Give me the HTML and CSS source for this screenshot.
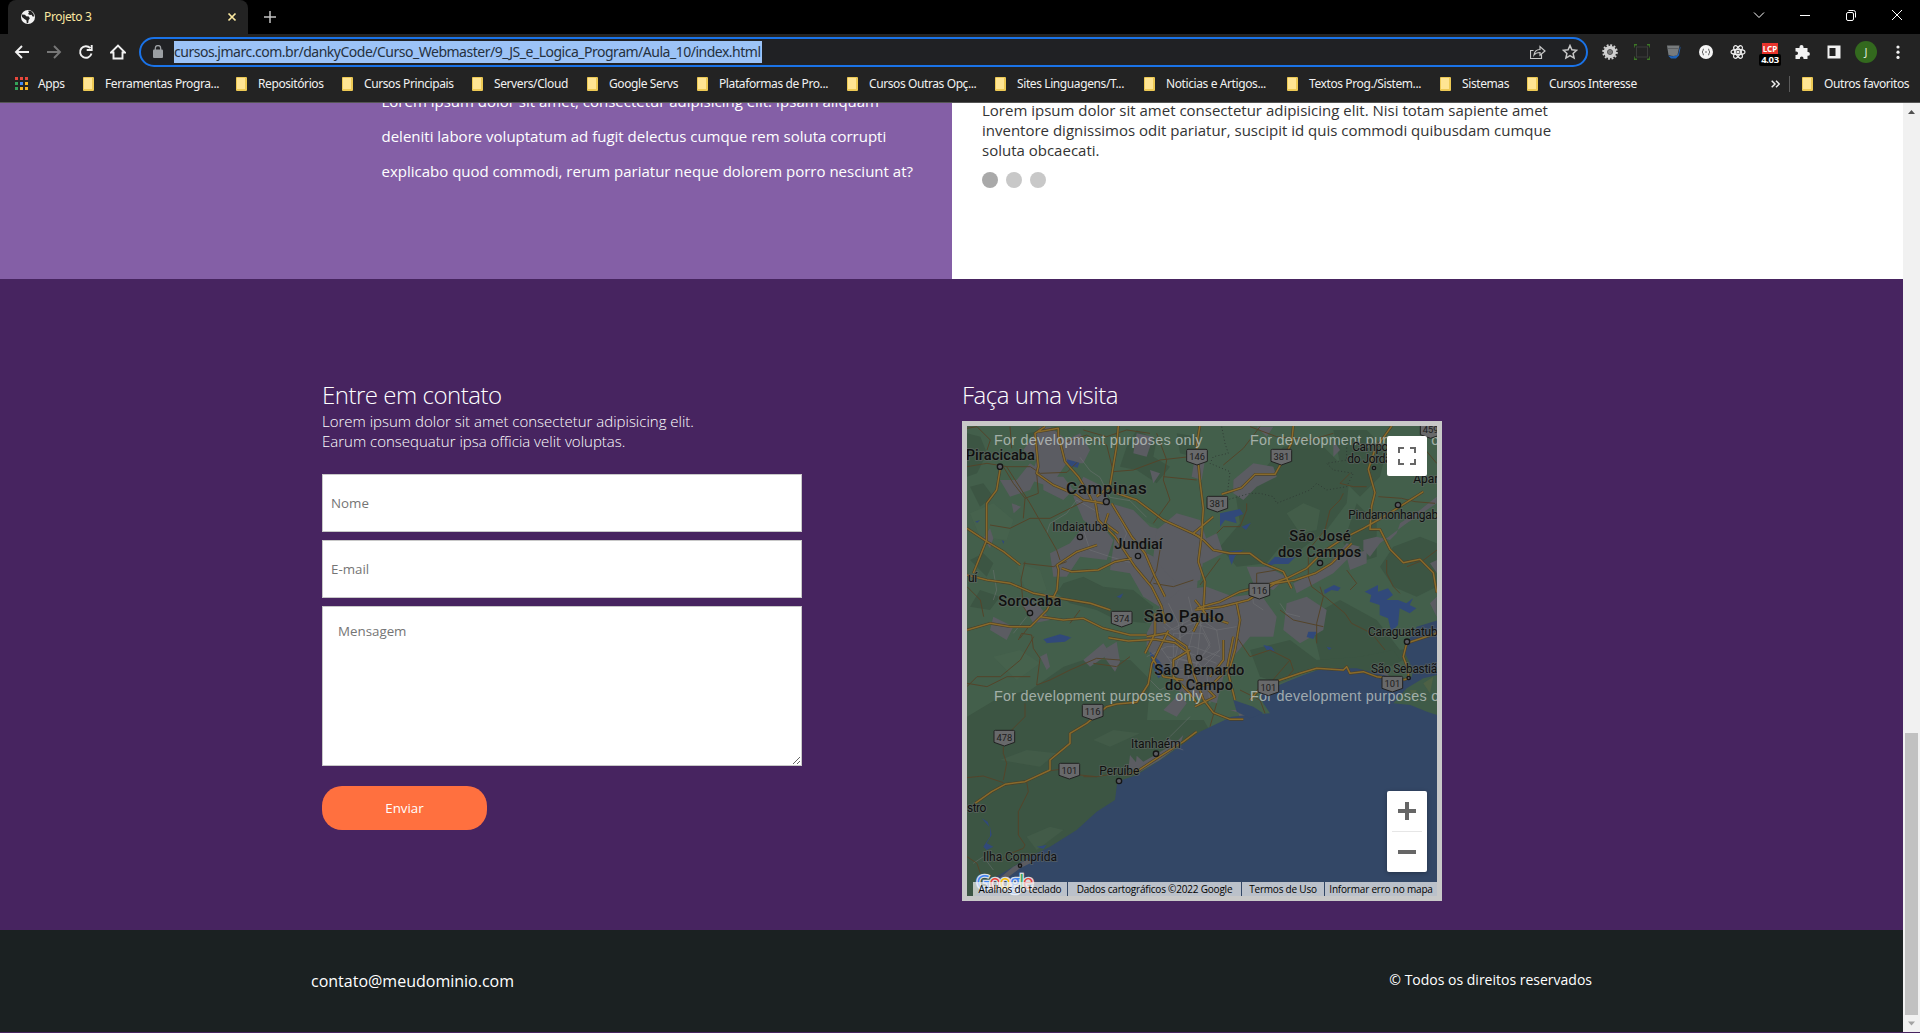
FILE: index.html
```html
<!DOCTYPE html>
<html lang="pt-br">
<head>
<meta charset="utf-8">
<title>Projeto 3</title>
<link rel="stylesheet" href="styles.css">
</head>
<body>
<header class="browser">
  <div class="tabstrip">
    <div class="tab">
      <svg class="favicon" width="16" height="16" viewBox="0 0 16 16"><circle cx="8" cy="8" r="7" fill="#f4f4f4"/><path d="M2 5.500l3 .2 1.200 1.600 2.600.3 1 1.900-1.200 1.600-.4 3-1.400.1-.4-3-2-1.300L2 8zM8 1.800l1 1.700-1 1.600 2 1 1.600-.4 1 1.800 1.600-.1-.8-3-2.300-2.300z" fill="#232323"/></svg>
      <span class="tab-title">Projeto 3</span>
      <svg class="tab-close" width="16" height="16" viewBox="0 0 16 16"><path d="M4.500 4.500l7 7m0-7l-7 7" stroke="#fbe8a0" stroke-width="1.700"/></svg>
    </div>
    <svg class="newtab" width="16" height="16" viewBox="0 0 16 16"><path d="M8 2v12M2 8h12" stroke="#c4c4c4" stroke-width="1.500"/></svg>
    <div class="window-buttons">
      <svg viewBox="0 0 16 16"><path d="M3 5.500l5 5 5-5" class="thin"/></svg>
      <svg viewBox="0 0 16 16"><path d="M3 8.500h10" class="thin"/></svg>
      <svg viewBox="0 0 16 16"><rect x="3.500" y="5.500" width="7" height="8" rx="1.500" class="thin"/><path d="M5.500 3.500h5a2 2 0 0 1 2 2v5" class="thin"/></svg>
      <svg viewBox="0 0 16 16"><path d="M3 3l10 10m0-10L3 13" class="thin"/></svg>
    </div>
  </div>
  <div class="toolbar">
    <div class="nav">
      <svg viewBox="0 0 16 16"><path d="M15 8H2m6-6L2 8l6 6" class="bold"/></svg>
      <svg viewBox="0 0 16 16"><path d="M1 8h13M8 2l6 6-6 6" class="bold dim"/></svg>
      <svg viewBox="0 0 16 16"><path d="M13.500 9.500A5.800 5.800 0 1 1 12.300 4.200M13.700 1v5H8.700" class="bold"/></svg>
      <svg viewBox="0 0 16 16"><path d="M1 8.500L8 1.500l7 7H12.500v6h-9v-6z" class="bold"/></svg>
    </div>
    <div class="address">
      <svg class="lock" width="10" height="14" viewBox="0 0 10 14"><rect y="4.500" width="10" height="8.500" rx="1" fill="#9b9fa3"/><path d="M2.300 5V3.200a2.700 2.700 0 0 1 5.400 0V5" fill="none" stroke="#9b9fa3" stroke-width="1.300"/></svg>
      <span class="url">cursos.jmarc.com.br/dankyCode/Curso_Webmaster/9_JS_e_Logica_Program/Aula_10/index.html</span>
      <div class="address-actions">
        <svg viewBox="0 0 16 16"><path d="M3.500 6.500h-3v8h11v-4M4 11c.5-3.500 2.500-5.400 6-5.500V2.500l5 4.500-5 4.300V8.500C7 8.500 5.300 9.300 4 11z" class="outline"/></svg>
        <svg viewBox="0 0 16 16"><path d="M8 1.500l1.900 4.300 4.700.5-3.500 3.200 1 4.600L8 11.700l-4.100 2.400 1-4.600L1.400 6.300l4.700-.5z" class="outline star"/></svg>
      </div>
    </div>
    <div class="extensions">
      <svg viewBox="0 0 16 16"><circle cx="8" cy="8" r="4.500" fill="none" stroke="#cfcfcf" stroke-width="3.500"/><circle cx="8" cy="8" r="6.800" fill="none" stroke="#cfcfcf" stroke-width="2" stroke-dasharray="1.900 1.660"/><circle cx="8" cy="8" r="2.300" fill="#777"/></svg>
      <svg viewBox="0 0 16 16"><rect x="2.500" y="3" width="11" height="10" fill="none" stroke="#3c3c3c"/><path d="M0 3.500V.8h3M13 .8h3v2.700M16 12.500v2.700h-3M3 15.200H0v-2.700" fill="none" stroke="#3d7826" stroke-width="1.500"/></svg>
      <svg viewBox="0 0 16 16"><path d="M2 11.500q6 2 10-1l2-8 .5 1-1.500 8-3 3H5z" fill="#1e62b8"/><path d="M1 1.500h12.500l-2 9.500q-4 2-9 0z" fill="#777b7d"/><path d="M2 4.500h10.500" stroke="#5c5f61" stroke-width="1"/></svg>
      <svg viewBox="0 0 16 16"><circle cx="8" cy="8" r="7" fill="#f5f5f5"/><path d="M6 5Q4.500 5 5 7L4 8l1 1Q4.500 11 6 11M10 5q1.500 0 1 2l1 1-1 1q.5 2-1 2M7 8h2" stroke="#666" fill="none"/></svg>
      <svg viewBox="0 0 16 16"><g fill="none" stroke="#ededed" stroke-width="1.200"><ellipse cx="8" cy="8" rx="7" ry="2.700"/><ellipse cx="8" cy="8" rx="7" ry="2.700" transform="rotate(60 8 8)"/><ellipse cx="8" cy="8" rx="7" ry="2.700" transform="rotate(120 8 8)"/></g><circle cx="8" cy="8" r="1.600" fill="#ededed"/></svg>
      <div class="lcp"><span class="lcp-name">LCP</span><span class="lcp-value">4.03</span></div>
      <svg viewBox="0 0 16 16"><path d="M1.500 4h4V3a2 2 0 0 1 4 0v1h4v4H14a1.900 1.900 0 0 1 0 3.800h-.5V15h-4v-.7a1.800 1.800 0 0 0-3.600 0v.7H1.500v-4H2.300a1.700 1.700 0 0 0 0-3.500h-.8z" fill="#f1f1f1"/></svg>
      <svg viewBox="0 0 16 16"><path d="M1.500 1.500h13v13h-13z" fill="#f1f1f1"/><path d="M3.500 4h6v8h-6z" fill="#232323"/></svg>
      <span class="avatar">J</span>
      <svg viewBox="0 0 16 16"><g fill="#f1f1f1"><circle cx="8" cy="3" r="1.600"/><circle cx="8" cy="8.200" r="1.600"/><circle cx="8" cy="13.400" r="1.600"/></g></svg>
    </div>
  </div>
  <nav class="bookmarks">
    <div class="bm apps">
      <svg width="13" height="13" viewBox="0 0 13 13"><path d="M0 0h3v3H0zM5 0h3v3H5zM10 0h3v3h-3z" fill="#e8483c"/><path d="M0 5h3v3H0z" fill="#34a45a"/><path d="M5 5h3v3H5z" fill="#438af4"/><path d="M10 5h3v3h-3z" fill="#f7b423"/><path d="M0 10h3v3H0z" fill="#34a45a"/><path d="M5 10h3v3H5zM10 10h3v3h-3z" fill="#f7b423"/></svg>
      <span>Apps</span>
    </div>
    <div class="bm b1"><i></i><span>Ferramentas Progra...</span></div>
    <div class="bm b2"><i></i><span>Repositórios</span></div>
    <div class="bm b3"><i></i><span>Cursos Principais</span></div>
    <div class="bm b4"><i></i><span>Servers/Cloud</span></div>
    <div class="bm b5"><i></i><span>Google Servs</span></div>
    <div class="bm b6"><i></i><span>Plataformas de Pro...</span></div>
    <div class="bm b7"><i></i><span>Cursos Outras Opç...</span></div>
    <div class="bm b8"><i></i><span>Sites Linguagens/T...</span></div>
    <div class="bm b9"><i></i><span>Noticias e Artigos...</span></div>
    <div class="bm b10"><i></i><span>Textos Prog./Sistem...</span></div>
    <div class="bm b11"><i></i><span>Sistemas</span></div>
    <div class="bm b12"><i></i><span>Cursos Interesse</span></div>
    <svg class="more" width="9" height="8" viewBox="0 0 9 8"><path d="M.7.7L4 4 .7 7.300M5 .7L8.300 4 5 7.300" fill="none" stroke="#eee" stroke-width="1.500"/></svg>
    <div class="bm other"><i></i><span>Outros favoritos</span></div>
  </nav>
</header>

<div class="viewport">
  <main class="page">
    <section class="about">
      <div class="about-left"><p>Lorem ipsum dolor sit amet, consectetur adipisicing elit. Ipsam aliquam<br>deleniti labore voluptatum ad fugit delectus cumque rem soluta corrupti<br>explicabo quod commodi, rerum pariatur neque dolorem porro nesciunt at?</p></div>
      <div class="about-right">
        <p>Lorem ipsum dolor sit amet consectetur adipisicing elit. Nisi totam sapiente amet<br>inventore dignissimos odit pariatur, suscipit id quis commodi quibusdam cumque<br>soluta obcaecati.</p>
        <div class="dots"><span class="on"></span><span></span><span></span></div>
      </div>
    </section>

    <section class="contact">
      <form class="form">
        <h2>Entre em contato</h2>
        <p>Lorem ipsum dolor sit amet consectetur adipisicing elit.<br>Earum consequatur ipsa officia velit voluptas.</p>
        <input type="text" placeholder="Nome">
        <input type="text" placeholder="E-mail">
        <textarea placeholder="Mensagem"></textarea>
        <button type="button">Enviar</button>
      </form>
      <div class="visit">
        <h2>Faça uma visita</h2>
        <div class="map">
          <svg class="map-canvas" width="470" height="470" viewBox="51 168 1410 1410">
            <rect x="51" y="168" width="1410" height="1410" fill="#435f4b"/>
            <!-- hills and forest -->
            <g fill="#3c5543">
              <path d="M51 190l40 10 20 50-30 60-30 10zM230 190l60-10 40 40-20 60-50-10zM560 180l60 30-10 50 50 30-40 50-60-40-50-10 20-60zM340 640l60-20 60 30 90 10 60 50-20 50-90-10-60-30-80-20-40-30zM60 570l40-20 30 30-20 40zM90 660l60 20-30 40-60-10zM60 350l40-10 30 40-40 30zM680 190l60 10-10 60-40-10z"/>
              <path d="M850 330l90-30 60-70 100-20 60 60 40 40-10 90-60 80-80 60-60-10-40 50-90 10-50-60 60-70zM1150 180l100 0 60 60-20 80-60 60-50-50zM1330 530l80-30 50 20v130l-60 30-70-30-40-60zM1080 740l90-50 110 60 70 90 110-20v110l-150 50-130-10-60-60zM1220 400l60 60 0 100-60 20-40-60z"/>
              <path d="M51 1040l100-60 90-20 100-70 60-20 140 0 60 60-10 120 170 0 40 70-70 70-80 50-60 80-30 60-110 80-150 90-90 30-60-50-60 70-80-20z"/>
              <path d="M900 840l120-30 80 60 130-10 100-20 40 60-80 40-120-10-80-30-100 40-60-20z"/>
            </g>
            <g fill="#4a6550">
              <path d="M60 430l70-30 60 50-20 60-80-10zM200 580l70 20 20 60-60 10zM560 440l60 30-20 60-60-20zM1010 430l50-30 50 20-10 60-50 10zM130 860l80-20 60 40-70 50zM1300 900l60-30 50 40-70 40z" opacity=".5"/>
              <path d="M150 1170l80-30 90 10-50 40zM430 1110l60-30 80 10-90 40zM230 1400l70-30 40 10-80 60zM970 940l90-30 60 10-90 50z" opacity=".4"/>
            </g>
            <!-- urban areas -->
            <g fill="#5b5c62">
              <path d="M270 170h30l50 40 40-20 30 50-20 40-50 0-50 70-60-20 20-60-40-30zM185 400l28 10-22 20zM150 330l50 0 40-50 30 20-30 60-60 20zM400 320l60 30 20 50 70 20 50 50 40 10-20 50-50-20-60-30-60 10-50-40-30-70zM280 320l60 0 30 40-30 30-60-30zM300 550l60-30 40-50 50-10 40 50-20 60-80-10-40 60-40 0zM500 460l70 30 20 60 60 30 70-70 30 20-10 140-40 60-40 0-80-50-40-70-60-10z"/>
              <path d="M620 480l60-50 70 20 20 60-20 120-60 20-40-40-40-50zM740 520l60-30 20 60-60 30zM735 260l30 10-10 60-30-10zM850 330l60-50 60 10 10 30-60 30-40 40-30-20zM890 590l60 0 60 30-40 40-60-20zM1010 700l60-20 60 40-10 60-70 40-50-40zM1240 510l40-10 40 10 20-20 10-30 60-40 50-40v20l-90 60-80 60-30 40-20-20zM1030 640l100-50 60-70 40 10-80 80-110 60zM1390 830l60-40v40l-50 40z"/>
              <path d="M590 790l40-80 60-50 80-10 80 30 80-10 50 70-10 60-70 0-50 60-30 60-20 80-100-30-20-50-60-30-30-60z"/>
              <path d="M230 680l40 30 30 40-50 10-30-50zM370 360l30 20-20 20zM460 840l40-25 10 60-15 30-30-40zM270 860l20-10 10 40-10 10zM100 505l20-30 10 30-10 30zM680 950l30 50-30 40-40-20 60-60zM840 1020l50 0 10 30-30-20zM1190 560l60-20 0 40-50 20zM1440 580l21-10v40zM1250 910l50-10 20 20-60 10zM560 190l50 10-20 60-40-10zM600 300l30 10-20 30zM130 740l60 30-20 40-50-30z"/>
              <path d="M535 1200l5-45 18 22 2-20 20 18 70-40 0-30 30 10 20-20-10 30-60 45-60 35zM865 1030l40 10 0 40-30-20zM920 170l50 0-20 30zM1150 210l20 30-20 20zM1440 700l20-20v60zM400 870l60-50 20 30-60 40z"/>
            </g>
            <!-- ocean -->
            <path fill="#334766" d="M75 1578l55-53 120-70 50-25 80-50 60-55 55-35 7-55 58-20 80-50 110-80 95-45 50-5 65-5-20-30-10-30 80-35 50-20 60-20h100l80 20 50 15 35-10 5-20-25-50 5-30 30-50 66-20V1578z"/>
            <path fill="#3f5b48" d="M1330 1000l40-45 50-30 41-10v120l-30-10-50-20z"/>
            <path fill="#4e6145" d="M1380 960l20 0-10 30zM1420 940l30-20-10 50z"/>
            <path fill="#334766" d="M850 990l60 20 30 20-40 15-40-20z"/>
            <path fill="#5b5c62" d="M130 1540l60-50 40-20 20 5-40 20-60 45z"/>
            <!-- lakes -->
            <g fill="#31497a">
              <path d="M350 268l20 5 18 5-5 15-20-5-10-5zM810 430l60-13 10 15-25 10 5 18-35-10-15 20zM875 470l28-12-15 22zM835 545l45-6-25 20-10 25-8-20zM945 590l30-30 40 5 22-5-22 22-40 0zM1122 660l30-15 20 8-8 10-20-3-20 12zM1244 665l40-20 0 20 30-10 15 20-20 15 35 0 25 10 20-15-10 20 20 10-20 15-30-15-5 50-20 20-10-40-25-10 0-30-30-10 5-20zM1075 785l25 0-10 22-20-6zM280 808l50-15 30 8-30 12-40 5zM285 820l50-15 30-3-20 13zM500 680l20-10-8 15zM75 455l15-5-8 8zM155 510l8 4-3 8z"/>
              <path d="M940 825l25 5 10 15-25-5zM1130 830l15 4-8 6zM600 845l30 30 20 30-25 20-20-40z"/>
              <path d="M95 1345l18 10 5 15-10-10zM120 1370l5 25-15 25 20 10-20 10-10-10 20-30zM260 1430l30-5-10 12z"/>
            </g>
            <!-- boundary -->
            <path d="M815 170l10 50 10 30-45 10-10 20 60 25-10 85 70-20 30 0 40 10 10 20 100-40 20-20 30 20 60-10 20-40-60-10-20-20 60-10 0-60" fill="none" stroke="#303c35" stroke-width="3" stroke-dasharray="3 7"/>
            <!-- city streets -->
            <g fill="none" stroke="#77787c" stroke-width="2" opacity=".65">
              <path d="M390 262l30 40 30 20 30 60 60 10 50 50M290 490l10-30 50-30 30-40 70 40M400 480l20 60 60 20 70 20M500 430l30 60-20 50M610 800l60 10 60 50 40 50 10 90M590 860l60-30 80 0 80 30M620 740l50 40 60-20 70 20 60-10M655 700l30 60 10 80-30 90M715 680l20 80-20 80 0 90M770 700l-20 60 30 60-50 80M640 770l40 40 90-60M650 860l90 20 70-40M130 600l10 60-10 30M230 740l-40 50M1050 740l-40-10-20-30M940 720l-30-20-5-60M130 1500l-30-40-30 20"/>
              <path d="M630 830l30-50 80-40 60 40 10 60-50 50-80 10zM670 790h90l20 40-40 50-70-20zM640 890l80-40 80 30M700 750l-30 140M755 740l-20 180M600 930l30 30 60-30M640 1120l60 20M660 1100l60-60"/>
            </g>
            <!-- secondary roads -->
            <g fill="none" stroke="#54442a" stroke-width="3">
              <path d="M180 170l5 65M51 175l30-5 40 40-10 30M51 290l60-10 60 10 70 0 30 20 80-3 30-30M160 290l30 50 35 45 40-15-5-60M225 385l-5 60M120 465l60 10 60-30 60 0 60-30 40-20M170 290l70 110 80 140 10 30M400 180l70 20 60-20 70 10M350 215l60-20 60 30 20 80 60-5 80-30 90-10M620 190l30 80-10 60 20 60-50 70M640 320l100 10M225 575l-12 55 7 80 20 30M220 580l90 10 40-15M51 650l40 40 10 50M600 640l20-40 10-60M610 640l60 10 60-20M360 760l30-40M430 880l70 10 40-30"/>
              <path d="M240 765l-30 40M205 810l10-20 30 5 5 40 20 30-10 80 40-15 60-30 80-35 70 5M51 950l30-30 70 0 60-50 40-70M51 940l60 10 60-30 70 0M225 1000l0 40-40 40M160 1130l0 20 10 30-10 50M50 1223l50-5 60 20M330 1198l-35 5M390 1215l50 5 60-10M230 1235l5 30-30 60 0 70 20 30-5 10-50 20-20 20M400 1220l40 0M51 1460l30 20 10 30"/>
              <path d="M820 285l60-50 50-65M900 170l80 30 100 10 70-20M890 400l0 20-20 50-50 0-20 20M810 565l-60 80M1180 370l-10 20-30 30-15 60-50 60 0 80 10 30 40 30 60 50 20 30 60 30 40 50M1200 310l-30 30 40 10 40 0M1285 380l70 5 40 10 60 5M1310 570l0 40 20 40 20 20M1461 540l-40 30-50 20M920 640l0-30 60-10M1110 650l10 30-20 80 0 60M1120 770l-90-20-40-30M1450 170l-40 50 50 60M1190 600l30 40-20 20"/>
              <path d="M860 800l40 60 60-20 60 30 10 30-25 30M1020 870l-60 70M870 960l60 30 15 40M800 1000l-20 70"/>
            </g>
            <!-- highways -->
            <defs>
              <g id="roads">
                <path d="M285 170l-30 20 10 100-5 20 50 35 70 30 20 15 60 10M265 185l60-10 0 20 20 80 40 45 30 50 10 20M435 390l10 60 50 50 60 90 50 60 30 60 10 50M440 380l40-30 20 20 60 20 80 60 110 50M505 168l-5 60-20 120-40 30M485 400l60 100 40 50 30 70 30 60M150 300l-10 60-30 40 0 110-40 100M51 475l60 40 50 30 50 40M51 615l60 15 70 10 70 30 80 15 90 15 60 20M51 780l70-20 60 10 60 0 30-30 20-20 30-60 5-60-5-15 60-40 60-20M335 595l30 10 80-5 50-25 50-10M270 740l70 10 60-5 60 30 80 20 50 0M475 430l-10 30 40 30"/>
                <path d="M750 165l-10 60 10 110 10 80-5 80-10 80 20 60-5 90-30 60M1030 168l-5 50-30 60-20 35-60 0-40 40-60 20M790 440l-60 50 30 20 30 30 50 10 60 0 40 30 60 25 25 50M740 715l70-20 60-30 80-20 60-20 60-30 50-50 60-40 60-30 70-40 110-70M735 720l80-10 80-20 80-50 60-10 60-20 50-30 60-60M1325 168l-50 70-20 60 20 70-10 40-5 70 30 0 30 60 40 40 50-10 40 40 10 60M860 700l10 50-15 90-20 70 20 80M735 690l40 50 60 20M590 800l60-10 60 40 10 60M615 730l0 60-30 60"/>
                <path d="M75 1300l50-35 40-22 60-8 75-35 0-30 60-50 0-30 50-30 60-50 30-8 60-5 35-55 10-60 50-100M475 803l60 10 80-5 60 10 40 30 15 60 30 80 30 40 50 20 40 0M700 930l-60-10-35-60M740 950l50-10 40-40 20-100M720 840l-50 30 0 50 50 50 20 30M780 920l40-50 0-60M900 990l30-35 60-25 60-20 50-15 80 5 10-10 10 20 40-5 40 15 40 5M1360 930l15-5 0-25-15-40 10-40 90-30M740 1085l-40 30-80 50-60 40-35 10M735 1010l60-30-20-20"/>
              </g>
            </defs>
            <use href="#roads" class="road-casing"/>
            <use href="#roads" class="road-core"/>
            <!-- development watermark -->
            <g class="watermark"><text x="132" y="224" textLength="625">For development purposes only</text><text x="900" y="224" textLength="625">For development purposes only</text><text x="132" y="992" textLength="625">For development purposes only</text><text x="900" y="992" textLength="625">For development purposes only</text></g>
            <!-- road shields -->
            <g class="shields">
              <g transform="translate(741 261)"><path d="M-31-20q0-3 4-3h54q4 0 4 3v33L0 24l-31-11z"/><text y="10">146</text></g>
              <g transform="translate(994 261)"><path d="M-31-20q0-3 4-3h54q4 0 4 3v33L0 24l-31-11z"/><text y="10">381</text></g>
              <g transform="translate(802 402)"><path d="M-31-20q0-3 4-3h54q4 0 4 3v33L0 24l-31-11z"/><text y="10">381</text></g>
              <g transform="translate(928 663)"><path d="M-31-20q0-3 4-3h54q4 0 4 3v33L0 24l-31-11z"/><text y="10">116</text></g>
              <g transform="translate(515 747)"><path d="M-31-20q0-3 4-3h54q4 0 4 3v33L0 24l-31-11z"/><text y="10">374</text></g>
              <g transform="translate(428 1026)"><path d="M-31-20q0-3 4-3h54q4 0 4 3v33L0 24l-31-11z"/><text y="10">116</text></g>
              <g transform="translate(163 1104)"><path d="M-31-20q0-3 4-3h54q4 0 4 3v33L0 24l-31-11z"/><text y="10">478</text></g>
              <g transform="translate(358 1203)"><path d="M-31-20q0-3 4-3h54q4 0 4 3v33L0 24l-31-11z"/><text y="10">101</text></g>
              <g transform="translate(955 953)"><path d="M-31-20q0-3 4-3h54q4 0 4 3v33L0 24l-31-11z"/><text y="10">101</text></g>
              <g transform="translate(1327 942)"><path d="M-31-20q0-3 4-3h54q4 0 4 3v33L0 24l-31-11z"/><text y="10">101</text></g>
              <g transform="translate(1442 181)"><path d="M-31-20q0-3 4-3h54q4 0 4 3v33L0 24l-31-11z"/><text y="8">459</text></g>
            </g>
            <g fill="#5b5c62" stroke="#151515" stroke-width="4">
              <circle cx="150" cy="290" r="8"/><circle cx="469" cy="395" r="9"/><circle cx="390" cy="501" r="8"/><circle cx="564" cy="558" r="8"/><circle cx="240" cy="729" r="8"/><circle cx="700" cy="778" r="9"/><circle cx="1110" cy="579" r="8"/><circle cx="1344" cy="405" r="8"/><circle cx="1272" cy="294" r="5"/><circle cx="747" cy="864" r="8"/><circle cx="1371" cy="815" r="8"/><circle cx="1376" cy="924" r="5"/><circle cx="618" cy="1151" r="8"/><circle cx="507" cy="1233" r="8"/><circle cx="210" cy="1487" r="5"/>
            </g>
            <!-- place names -->
            <g class="places">
              <text class="l" x="47" y="270" textLength="208">Piracicaba</text>
              <text class="xl" x="348" y="372" textLength="242">Campinas</text>
              <text class="s" x="307" y="483" textLength="167">Indaiatuba</text>
              <text class="l" x="493" y="538" textLength="145">Jundiaí</text>
              <text class="s" x="54" y="636" textLength="28">uí</text>
              <text class="l" x="145" y="709" textLength="189">Sorocaba</text>
              <text class="xl" x="581" y="756" textLength="241">São Paulo</text>
              <text class="s" x="1207" y="243" textLength="125">Campos</text>
              <text class="s" x="1192" y="279" textLength="152">do Jordão</text>
              <text class="s" x="1390" y="340" textLength="160">Aparecida</text>
              <text class="s" x="1195" y="447" textLength="288">Pindamonhangaba</text>
              <text class="l" x="1018" y="514" textLength="184">São José</text>
              <text class="l" x="984" y="560" textLength="250">dos Campos</text>
              <text class="s" x="1254" y="798" textLength="228">Caraguatatuba</text>
              <text class="s" x="1263" y="909" textLength="218">São Sebastião</text>
              <text class="l" x="613" y="916" textLength="270">São Bernardo</text>
              <text class="l" x="645" y="961" textLength="204">do Campo</text>
              <text class="s" x="543" y="1134" textLength="149">Itanhaém</text>
              <text class="s" x="448" y="1215" textLength="120">Peruíbe</text>
              <text class="s" x="51" y="1326" textLength="58">stro</text>
              <text class="s" x="99" y="1474" textLength="222">Ilha Comprida</text>
            </g>
            <g class="google"><text x="79" y="1556" textLength="172"><tspan fill="#4285f4">G</tspan><tspan fill="#ea4335">o</tspan><tspan fill="#fbbc05">o</tspan><tspan fill="#4285f4">g</tspan><tspan fill="#34a853">l</tspan><tspan fill="#ea4335">e</tspan></text></g>
          </svg>
          <div class="fullscreen"><svg width="18" height="18" viewBox="0 0 18 18"><path d="M0 6V0h6v2H2v4zM12 0h6v6h-2V2h-4zM16 12h2v6h-6v-2h4zM0 12h2v4h4v2H0z" fill="#666"/></svg></div>
          <div class="zoom"><svg width="18" height="18" viewBox="0 0 18 18"><path d="M7 0h4v7h7v4h-7v7H7v-7H0V7h7z" fill="#666"/></svg><hr><svg width="18" height="18" viewBox="0 0 18 18"><path d="M0 7h18v4H0z" fill="#666"/></svg></div>
          <div class="credits"><span class="c1">Atalhos do teclado</span><span class="c2">Dados cartográficos ©2022 Google</span><span class="c3">Termos de Uso</span><span class="c4">Informar erro no mapa</span></div>
        </div>
      </div>
    </section>

    <footer class="footer"><span class="mail">contato@meudominio.com</span><span class="rights">© Todos os direitos reservados</span></footer>
  </main>
  <div class="scrollbar">
    <svg width="17" height="17" viewBox="0 0 17 17"><path d="M5 11l3.500-4 3.500 4z" fill="#505050"/></svg>
    <div class="thumb"></div>
    <svg width="17" height="17" viewBox="0 0 17 17"><path d="M5 6.500l3.500 4 3.500-4z" fill="#a3a3a3"/></svg>
  </div>
</div>
</body>
</html>
```
FILE: styles.css
```css
* { box-sizing: border-box; margin: 0; padding: 0; }
body { width: 1920px; height: 1033px; overflow: hidden; background: #472460; font-family: "Open Sans", "Noto Sans", sans-serif; }

/* Browser frame */
.browser { height: 103px; background: #232323; border-bottom: 1px solid #555; font-family: "Noto Sans", sans-serif; }
.tabstrip { height: 34px; background: #000; display: flex; align-items: center; padding-left: 8px; }
.tab { width: 240px; height: 34px; background: #232323; border-radius: 8px 8px 0 0; display: flex; align-items: center; padding: 0 8px 0 12px; }
.tab-title { margin: -2px 0 0 8px; flex: 1; font-size: 12px; color: #fbe8a0; letter-spacing: -.35px; }
.newtab { margin-left: 14px; }
.window-buttons { margin-left: auto; display: flex; padding-bottom: 5px; }
.window-buttons svg { width: 16px; height: 16px; margin: 0 15px; }
.thin { fill: none; stroke: #fff; stroke-width: 1; }
.toolbar { height: 36px; display: flex; align-items: center; padding: 0 6px; }
.nav, .extensions, .address-actions { display: flex; align-items: center; flex: none; }
.nav svg, .extensions > svg, .address-actions svg { width: 16px; height: 16px; margin: 0 8px; }
.bold { fill: none; stroke: #f1f1f1; stroke-width: 1.9; }
.dim { stroke: #777; }
.outline { fill: none; stroke: #c8c8c8; stroke-width: 1.2; }
.star { stroke-width: 1.5; }
.address { margin: 0 6px 0 5px; width: 1449px; height: 30px; border: 2px solid #1a73e8; border-radius: 15px; background: #202124; display: flex; align-items: center; }
.lock { margin-left: 12px; }
.url { margin-left: 11px; height: 22px; line-height: 22px; width: 588px; background: #9cc3f7; color: #25313e; font-size: 14px; letter-spacing: -.49px; white-space: nowrap; }
.address-actions { margin-left: auto; }
.lcp { width: 22px; margin: 4px 5px 0; display: flex; flex-direction: column; align-items: center; color: #fff; font-weight: 700; line-height: 13px; }
.lcp-name { width: 16px; height: 11px; line-height: 11px; background: #e8332c; font-size: 8px; text-align: center; }
.lcp-value { width: 22px; height: 12px; line-height: 12px; background: #000; border-radius: 2px; font-size: 9.5px; text-align: center; letter-spacing: -.4px; }
.avatar { width: 22px; height: 22px; margin: 0 5px; border-radius: 50%; background: #33691e; color: #dfe8d8; font-size: 11px; line-height: 22px; text-align: center; }
.bookmarks { height: 32px; display: flex; align-items: center; padding: 0 0 5px 15px; color: #f1f1f1; font-size: 12px; letter-spacing: -.4px; }
.bm { display: flex; align-items: center; white-space: nowrap; flex: none; }
.bm i { width: 11px; height: 14px; margin-right: 11px; background: #ffe593; border: 1px solid #edc954; border-bottom-width: 2px; border-right-width: 2px; border-radius: 1px; }
.apps { width: 68px; }
.apps svg { margin-right: 10px; }
.b1 { width: 153px; } .b2 { width: 106px; } .b3 { width: 130px; } .b4 { width: 115px; }
.b5 { width: 110px; } .b6 { width: 150px; } .b7 { width: 148px; } .b8 { width: 149px; }
.b9 { width: 143px; } .b10 { width: 153px; } .b11 { width: 87px; } .b12 { width: 120px; }
.more { margin-left: auto; margin-right: 9px; flex: none; }
.other { width: 131px; height: 16px; border-left: 1px solid #5a5a5a; padding-left: 12px; }

/* Page */
.viewport { display: flex; height: 930px; }
.page { width: 1903px; height: 929px; overflow: hidden; background: #fff; }
.about { display: flex; height: 176px; }
.about-left { width: 952px; background: #845fa6; color: #fff; overflow: hidden; }
.about-left p { margin: -19px 0 0 381.500px; font-size: 15px; line-height: 35px; white-space: nowrap; }
.about-right { padding-left: 30px; color: #333; overflow: hidden; }
.about-right p { margin-top: -3px; font-size: 15px; line-height: 20px; white-space: nowrap; }
.dots { display: flex; gap: 8px; margin-top: 12px; }
.dots span { width: 16px; height: 16px; border-radius: 50%; background: #c8c8c8; }
.dots .on { background: #a9a9a9; }
.contact { height: 651px; background: #472460; padding: 99px 0 0 322px; display: flex; gap: 160px; color: #fff; }
.contact h2 { font-size: 24px; font-weight: 300; line-height: 33px; letter-spacing: -.48px; }
.form { width: 480px; display: flex; flex-direction: column; align-items: flex-start; }
.form p { font-size: 15px; line-height: 20px; font-weight: 300; margin-bottom: 23px; white-space: nowrap; }
.form input { width: 480px; height: 58px; border: 1px solid #c8c8c8; padding: 0 8px; margin-bottom: 8px; font: 13.333px "Open Sans", sans-serif; }
.form textarea { width: 480px; height: 160px; border: 1px solid #c8c8c8; padding: 15px; font: 13.333px "Open Sans", sans-serif; }
.form ::placeholder { color: #757575; }
.form button { margin-top: 20px; width: 165px; height: 44px; border: 0; border-radius: 20px; background: #ff703f; color: #fff; font: 13.333px "Open Sans", sans-serif; }
.visit h2 { margin-bottom: 10px; }
.map { position: relative; width: 480px; height: 480px; border: 5px solid #c8c8c8; overflow: hidden; }
.map-canvas { display: block; }
.road-casing { fill: none; stroke: #4b4028; stroke-width: 8; stroke-linejoin: round; }
.road-core { fill: none; stroke: #886a2b; stroke-width: 4.5; stroke-linejoin: round; }
.watermark { font: 43px "Liberation Sans", sans-serif; fill: #c4cbc8; opacity: .75; }
.shields path { fill: #68696b; stroke: #222; stroke-width: 3; }
.shields text { font: 28px Roboto, sans-serif; fill: #1c1c1c; text-anchor: middle; }
.places { font-family: Roboto, sans-serif; fill: #101010; stroke: #606663; stroke-width: 6; stroke-opacity: .6; paint-order: stroke; stroke-linejoin: round; }
.s { font-size: 36px; }
.l { font-size: 44px; font-weight: 500; }
.xl { font-size: 51px; font-weight: 500; }
.google text { font: 500 58px "Open Sans", sans-serif; stroke: #d7dde3; stroke-width: 8; paint-order: stroke; }
.fullscreen { position: absolute; right: 10px; top: 10px; width: 40px; height: 40px; border-radius: 2px; background: #fff; display: flex; align-items: center; justify-content: center; }
.zoom { position: absolute; right: 10px; bottom: 24px; width: 40px; height: 81px; border-radius: 2px; background: #fff; display: flex; flex-direction: column; align-items: center; justify-content: space-between; padding: 11px 0; box-shadow: 0 1px 4px rgba(0,0,0,.3); }
.zoom hr { width: 30px; border: 0; border-top: 1px solid #e6e6e6; }
.credits { position: absolute; right: 0; bottom: 0; height: 14px; display: flex; gap: 1px; font-size: 10px; letter-spacing: -.2px; line-height: 15px; color: #000; white-space: nowrap; }
.credits span { background: rgba(245,245,245,.7); text-align: center; height: 14px; }
.c1 { width: 94px; } .c2 { width: 173px; } .c3 { width: 82px; } .c4 { width: 112px; }
.footer { height: 102px; background: #1b2122; color: #fff; display: flex; align-items: center; justify-content: space-between; padding: 0 311px; }
.mail { font-size: 16px; }
.rights { font-size: 14px; margin-top: -3px; }
.scrollbar { width: 17px; height: 929px; background: #f1f1f1; display: flex; flex-direction: column; }
.thumb { margin: auto 2px 0; height: 282px; background: #c1c1c1; }
```
